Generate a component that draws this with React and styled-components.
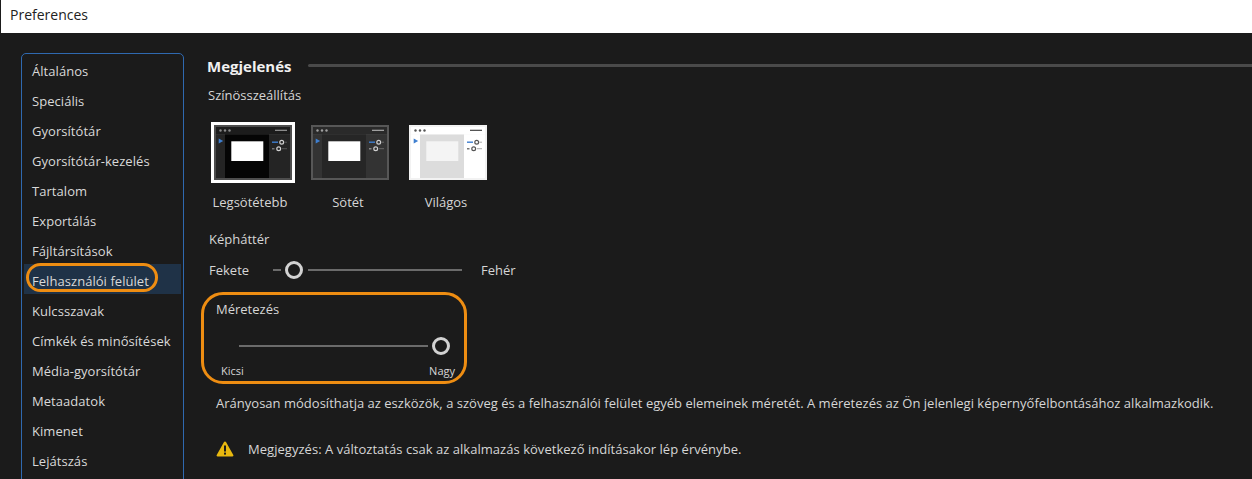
import React from 'react';
import styled, { createGlobalStyle } from 'styled-components';

const NAV_ITEMS = [
  'Általános',
  'Speciális',
  'Gyorsítótár',
  'Gyorsítótár-kezelés',
  'Tartalom',
  'Exportálás',
  'Fájltársítások',
  'Felhasználói felület',
  'Kulcsszavak',
  'Címkék és minősítések',
  'Média-gyorsítótár',
  'Metaadatok',
  'Kimenet',
  'Lejátszás'
];

const SCHEMES = [
  {
    name: 'Legsötétebb',
    selected: true,
    frame: '#4d4d4d',
    head: '#1c1c1c',
    side: '#242424',
    center: '#050505',
    sheet: '#ffffff',
    ink: '#8a8a8a',
    knob: '#d0d0d0'
  },
  {
    name: 'Sötét',
    frame: '#575757',
    head: '#2a2a2a',
    side: '#333333',
    center: '#262626',
    sheet: '#ffffff',
    ink: '#a0a0a0',
    knob: '#d0d0d0'
  },
  {
    name: 'Világos',
    frame: '#f2f2f2',
    head: '#ffffff',
    side: '#ffffff',
    center: '#dcdcdc',
    sheet: '#f4f4f4',
    ink: '#555555',
    knob: '#555555'
  }
];

function SchemeThumb({ scheme }) {
  const { frame, head, side, center, sheet, ink, knob } = scheme;
  return (
    <svg width='78' height='55' viewBox='0 0 78 55'>
      <rect width='78' height='55' fill={frame} />
      <rect x='2' y='2' width='74' height='7.5' fill={head} />
      <rect x='2' y='9.5' width='74' height='43.5' fill={side} />
      <rect x='11' y='9.5' width='44' height='43.5' fill={center} />
      <rect x='17.3' y='16.3' width='32' height='19.7' fill={sheet} />
      <circle cx='6.5' cy='5.5' r='1.2' fill={ink} />
      <circle cx='11' cy='5.5' r='1.2' fill={ink} />
      <circle cx='15.5' cy='5.5' r='1.2' fill={ink} />
      <rect x='61' y='4.7' width='12' height='1.3' fill={ink} />
      <path d='M4.7 13.6l4.5 2.4-4.5 2.4z' fill='#3f7fd0' />
      <rect x='58' y='16.5' width='6' height='1.4' fill='#3f7fd0' />
      <circle cx='67.7' cy='17.2' r='1.9' fill='none' stroke={knob} strokeWidth='1.2' />
      <rect x='70.5' y='16.7' width='2.5' height='1' fill={ink} opacity='0.5' />
      <rect x='58' y='23.2' width='2.5' height='1.2' fill={ink} />
      <circle cx='64.7' cy='23.7' r='1.9' fill='none' stroke={knob} strokeWidth='1.2' />
      <rect x='68' y='23.2' width='5' height='1' fill={ink} opacity='0.5' />
    </svg>
  );
}

function WarningIcon() {
  return (
    <svg width='18' height='16' viewBox='0 0 18 16'>
      <path d='M9 .5a1.1 1.1 0 0 1 1 .6l7.3 12.9a1 1 0 0 1-.9 1.5H1.6a1 1 0 0 1-.9-1.5L8 1.1A1.1 1.1 0 0 1 9 .5z' fill='#e8b80f' />
      <rect x='8' y='4.5' width='2' height='6' fill='#1b1b1b' />
      <rect x='8' y='11.6' width='2' height='2' fill='#1b1b1b' />
    </svg>
  );
}

export default function App() {
  return (
    <Page>
      <GlobalStyle />
      <TitleBar>Preferences</TitleBar>
      <Body>
        <Sidebar>
          {NAV_ITEMS.map((item) => {
            const active = item === 'Felhasználói felület';
            return (
              <NavItem key={item} $active={active}>
                {item}
                {active && <Pill />}
              </NavItem>
            );
          })}
        </Sidebar>
        <Main>
          <SectionHead>
            <SectionTitle>Megjelenés</SectionTitle>
            <SectionRule />
          </SectionHead>
          <GroupLabel>Színösszeállítás</GroupLabel>
          <Schemes>
            {SCHEMES.map((scheme) => (
              <Scheme key={scheme.name}>
                <ThumbFrame $selected={scheme.selected}>
                  <SchemeThumb scheme={scheme} />
                </ThumbFrame>
                <SchemeName>{scheme.name}</SchemeName>
              </Scheme>
            ))}
          </Schemes>
          <BackdropLabel>Képháttér</BackdropLabel>
          <BackdropRow>
            <SliderEnd>Fekete</SliderEnd>
            <Track $w={8} />
            <Knob $ml={4} $mr={5} />
            <Track $w={154} />
            <SliderEnd $ml={19}>Fehér</SliderEnd>
          </BackdropRow>
          <ScaleBox>
            <ScaleLabel>Méretezés</ScaleLabel>
            <ScaleRow>
              <Track $w={189} />
              <Knob $ml={4} $mr={0} />
            </ScaleRow>
            <ScaleEnds>
              <span>Kicsi</span>
              <span>Nagy</span>
            </ScaleEnds>
          </ScaleBox>
          <Description>
            Arányosan módosíthatja az eszközök, a szöveg és a felhasználói felület egyéb elemeinek méretét. A méretezés az Ön jelenlegi képernyőfelbontásához alkalmazkodik.
          </Description>
          <Note>
            <WarningIcon />
            <span>Megjegyzés: A változtatás csak az alkalmazás következő indításakor lép érvénybe.</span>
          </Note>
        </Main>
      </Body>
    </Page>
  );
}

const GlobalStyle = createGlobalStyle`
  html, body {
    margin: 0;
    padding: 0;
    background: #1b1b1b;
  }
`;
const Page = styled.div`
  width: 1252px;
  height: 479px;
  overflow: hidden;
  font-family: 'Open Sans', 'Liberation Sans', sans-serif;
  font-size: 13px;
  color: #d6d6d6;
  background: #1b1b1b;
`;
const TitleBar = styled.div`
  height: 33px;
  margin-left: 1px;
  padding-left: 9px;
  background: #fff;
  color: #222;
  font-size: 14px;
  line-height: 30px;
`;
const Body = styled.div`
  display: flex;
  align-items: flex-start;
  padding: 20px 0 0 21px;
`;
const Sidebar = styled.div`
  flex: none;
  width: 163px;
  height: 460px;
  box-sizing: border-box;
  padding: 0 2px;
  border: 1px solid #2f69b0;
  border-radius: 5px;
`;
const NavItem = styled.div`
  position: relative;
  height: 30px;
  padding-left: 8px;
  line-height: 34px;
  letter-spacing: 0.05px;
  white-space: nowrap;
  background: ${({ $active }) => ($active ? '#1f3247' : 'transparent')};
  color: #d9d9d9;
`;
const Pill = styled.span`
  position: absolute;
  left: 2px;
  top: -1px;
  width: 132px;
  height: 29px;
  box-sizing: border-box;
  border: 3px solid #ee8d12;
  border-radius: 15px;
`;
const Main = styled.div`
  flex: 1;
  min-width: 0;
  margin-left: 23px;
  padding-top: 3px;
`;
const SectionHead = styled.div`
  display: flex;
  align-items: center;
  gap: 16px;
`;
const SectionTitle = styled.div`
  font-size: 15px;
  font-weight: 700;
  line-height: 20px;
  color: #f0f0f0;
`;
const SectionRule = styled.div`
  flex: 1;
  height: 3px;
  margin-bottom: 2px;
  background: #4a4a4a;
  border-radius: 2px 0 0 2px;
`;
const GroupLabel = styled.div`
  margin: 10px 0 0 1px;
  line-height: 18px;
`;
const Schemes = styled.div`
  display: flex;
  margin: 18px 0 0 4px;
`;
const Scheme = styled.div`
  width: 98px;
  display: flex;
  flex-direction: column;
  align-items: flex-start;
`;
const ThumbFrame = styled.div`
  display: flex;
  width: 84px;
  height: 61px;
  align-items: center;
  box-sizing: border-box;
  padding-left: ${({ $selected }) => ($selected ? 0 : 2)}px;
  border: ${({ $selected }) => ($selected ? '3px solid #fff' : 'none')};
`;
const SchemeName = styled.div`
  width: 78px;
  margin-top: 10px;
  text-align: center;
  line-height: 18px;
  white-space: nowrap;
`;
const BackdropLabel = styled.div`
  margin: 19px 0 0 2px;
  line-height: 18px;
`;
const BackdropRow = styled.div`
  display: flex;
  align-items: center;
  height: 20px;
  margin: 12px 0 0 2px;
`;
const SliderEnd = styled.span`
  width: ${({ $ml }) => ($ml ? 'auto' : '64px')};
  margin-left: ${({ $ml }) => $ml || 0}px;
`;
const Track = styled.div`
  width: ${({ $w }) => $w}px;
  height: 2px;
  background: #6b6b6b;
`;
const Knob = styled.div`
  width: 18px;
  height: 18px;
  box-sizing: border-box;
  margin: 0 ${({ $mr }) => $mr}px 0 ${({ $ml }) => $ml}px;
  border: 3px solid #d2d2d2;
  border-radius: 50%;
`;
const ScaleBox = styled.div`
  width: 266px;
  height: 92px;
  box-sizing: border-box;
  margin: 12px 0 0 -6px;
  padding: 5px 9px 0 12px;
  border: 3px solid #ee8d12;
  border-radius: 22px;
`;
const ScaleLabel = styled.div`
  line-height: 18px;
`;
const ScaleRow = styled.div`
  display: flex;
  align-items: center;
  height: 20px;
  margin: 18px 0 0 23px;
`;
const ScaleEnds = styled.div`
  display: flex;
  justify-content: space-between;
  margin: 7px 0 0 5px;
  font-size: 11px;
  line-height: 16px;
`;
const Description = styled.div`
  margin: 10px 0 0 9px;
  line-height: 18px;
  letter-spacing: 0.012px;
  white-space: nowrap;
`;
const Note = styled.div`
  display: flex;
  align-items: center;
  gap: 14px;
  margin: 28px 0 0 9px;
  line-height: 18px;
  letter-spacing: 0.035px;
  white-space: nowrap;
`;
